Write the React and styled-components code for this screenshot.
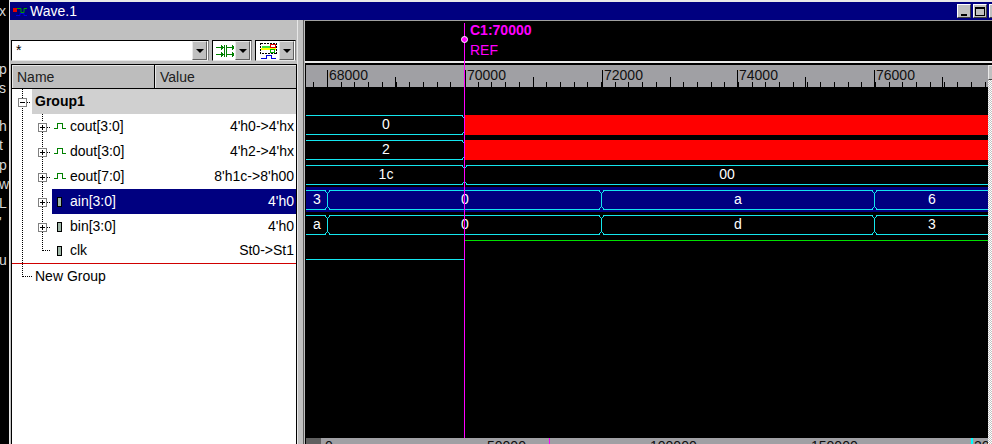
import React from 'react';
import styled, { createGlobalStyle } from 'styled-components';

const GlobalStyle = createGlobalStyle`
    html, body {
        margin: 0;
        padding: 0;
        background: #000;
    }
    body {
        font-family: 'Liberation Sans', Arial, sans-serif;
        font-size: 14px;
    }
`;

const Screen = styled.div`
    display: flex;
    width: 992px;
    height: 444px;
    overflow: hidden;
    background: #000;
`;

const Terminal = styled.div`
    width: 9px;
    flex: none;
    padding-top: 2px;
    overflow: hidden;
    color: #d8d8d8;
`;

const TerminalLine = styled.div`
    height: 19.2px;
    line-height: 19px;
    white-space: nowrap;
    text-indent: ${(p) => p.$indent}px;
`;

const Window = styled.div`
    flex: 1;
    display: flex;
    flex-direction: column;
    min-width: 0;
    border-left: 1px solid #e8e8e8;
    border-top: 2px solid #e8e8e8;
    background: #c0c0c0;
`;

const TitleBar = styled.div`
    height: 18px;
    flex: none;
    display: flex;
    align-items: center;
    gap: 3px;
    padding-left: 3px;
    background: #000080;
    color: #fff;
    line-height: 20px;
`;

const TitleText = styled.span`
    flex: 1;
`;

const WinButtons = styled.div`
    display: flex;
    gap: 2px;
    margin-right: -11px;
`;

const WinButton = styled.div`
    width: 14px;
    height: 14px;
    box-sizing: border-box;
    display: flex;
    align-items: center;
    justify-content: center;
    background: #c0c0c0;
    border: 1px solid;
    border-color: #fff #404040 #404040 #fff;

    i {
        display: block;
        box-sizing: border-box;
    }
    .min {
        width: 6px;
        height: 2px;
        margin-top: 7px;
        background: #000;
    }
    .max {
        width: 10px;
        height: 9px;
        border: 1px solid #000;
        border-top-width: 2px;
    }
`;

const Main = styled.div`
    flex: 1;
    display: flex;
    min-height: 0;
`;

const LeftPanel = styled.div`
    width: 287px;
    flex: none;
    display: flex;
    flex-direction: column;
    padding: 20px 0 0 1px;
    box-sizing: border-box;
`;

const ComboRow = styled.div`
    display: flex;
    gap: 3px;
    height: 21px;
    margin-right: 1px;
`;

const Combo = styled.div`
    display: flex;
    align-items: center;
    box-sizing: border-box;
    width: ${(p) => p.$w}px;
    height: 21px;
    padding: 0 1px 0 ${(p) => p.$pad}px;
    background: #fff;
    border: 1px solid;
    border-color: #000 #808080 #e8e8e8 #000;
`;

const ComboText = styled.span`
    flex: 1;
    line-height: 21px;
    color: #000;
`;

const ComboIcon = styled.div`
    flex: 1;
    display: flex;
    align-items: center;
`;

const ArrowButton = styled.div`
    width: 15px;
    height: 19px;
    box-sizing: border-box;
    display: flex;
    align-items: center;
    justify-content: center;
    background: #c0c0c0;
    border: 1px solid;
    border-color: #e8e8e8 #606060 #606060 #e8e8e8;

    &::after {
        content: '';
        border: 4px solid transparent;
        border-top: 4px solid #000;
        border-bottom: 0;
    }
`;

const TreeFrame = styled.div`
    flex: 1;
    display: flex;
    flex-direction: column;
    min-height: 0;
    margin-top: 3px;
    border-left: 1px solid #000;
    border-right: 1px solid #000;
    background: #fff;
`;

const HeaderRow = styled.div`
    height: 25px;
    flex: none;
    display: flex;
    gap: 1px;
    box-sizing: border-box;
    background: #000;
    border-top: 1px solid #000;
    border-bottom: 1px solid #000;
`;

const HeaderCell = styled.div`
    width: ${(p) => p.$w}px;
    box-sizing: border-box;
    padding-left: 4px;
    line-height: 22px;
    color: #202020;
    background: #bdbdbd;
    border-top: 1px solid #e8e8e8;
    border-left: 1px solid #e8e8e8;
`;

const Tree = styled.div`
    position: relative;
    flex: 1;
`;

const TreeLines = styled.svg`
    position: absolute;
    left: 0;
    top: 0;
    pointer-events: none;
`;

const TreeRow = styled.div`
    position: relative;
    height: 25px;
    display: flex;
    align-items: center;
    box-sizing: border-box;
    padding-left: ${(p) => p.$indent}px;
    padding-bottom: ${(p) => (p.$plain ? 2 : 0)}px;
    border-bottom: ${(p) => (p.$rule ? '1px solid #d00000' : '0')};
`;

const Expander = styled.div`
    width: 9px;
    height: 9px;
    flex: none;
    box-sizing: border-box;
    margin-top: 2px;
    display: flex;
    align-items: center;
    justify-content: center;
    background: #fff;
    border: 1px solid #808080;
    color: #000;
    position: relative;

    &::before {
        content: '';
        width: 5px;
        height: 1px;
        background: #000;
    }
    &::after {
        content: '';
        display: ${(p) => (p.$open ? 'none' : 'block')};
        position: absolute;
        left: 3px;
        top: 1px;
        width: 1px;
        height: 5px;
        background: #000;
    }
`;

const ExpanderGap = styled.div`
    width: 9px;
    flex: none;
`;

const RowBody = styled.div`
    flex: 1;
    height: 25px;
    display: flex;
    align-items: center;
    box-sizing: border-box;
    margin-left: ${(p) => p.$gap}px;
    padding: 0 2px 2px ${(p) => p.$pad || 0}px;
    background: ${(p) => (p.$selected ? '#000080' : p.$group ? '#d0d0d0' : 'transparent')};
    color: ${(p) => (p.$selected ? '#fff' : '#000')};
    font-weight: ${(p) => (p.$group ? 700 : 400)};
`;

const SignalIcon = styled.div`
    width: 16px;
    flex: none;
    display: flex;
    justify-content: center;
    margin: 2px 2px 0 0;
`;

const BusMark = styled.div`
    width: 5px;
    height: 10px;
    margin-right: 1px;
    box-sizing: border-box;
    background: #a0b8a8;
    border: 1px solid #000;
`;

const RowLabel = styled.span`
    flex: 1;
`;

const Splitter = styled.div`
    width: 7px;
    flex: none;
    box-sizing: border-box;
    background: #c0c0c0;
    border-left: 1px solid #e8e8e8;
    border-right: 1px solid #606060;
`;

const WavePanel = styled.div`
    position: relative;
    flex: 1;
    min-width: 0;
    display: flex;
    flex-direction: column;
    background: #000;
    border-top: 1px solid #a0a0a0;
    border-left: 1px solid #c0c0c0;
`;

const CursorBar = styled.div`
    height: 42px;
    flex: none;
    box-sizing: border-box;
    padding: 1px 0 0 165px;
    border-bottom: 2px solid #e8e8e8;
    color: #ff00ff;
`;

const CursorName = styled.div`
    font-weight: 700;
    line-height: 17px;
    height: 20px;
`;

const CursorKind = styled.div`
    line-height: 16px;
`;

const CursorLine = styled.div`
    position: absolute;
    left: 159px;
    top: 2px;
    bottom: 6px;
    width: 1px;
    background: #ff00ff;
`;

const CursorDot = styled.div`
    position: absolute;
    left: 156px;
    top: 15px;
    width: 7px;
    height: 7px;
    box-sizing: border-box;
    border-radius: 50%;
    background: #ff00ff;
    border: 1px solid #fff;
`;

const WaveBody = styled.div`
    flex: 1;
    display: flex;
    min-height: 0;
    padding-top: 2px;
`;

const WaveColumn = styled.div`
    flex: 1;
    min-width: 0;
    display: flex;
    flex-direction: column;
    padding-left: 1px;
`;

const Ruler = styled.svg`
    display: block;
    flex: none;
    background: #a0a0a4;
`;

const Rows = styled.div`
    flex: 1;
    min-height: 0;
    padding-top: 25px;
`;

const WaveSvg = styled.svg`
    display: block;
`;

const Overview = styled.svg`
    display: block;
    flex: none;
    background: #a0a0a4;
`;

const VScroll = styled.div`
    width: 4px;
    flex: none;
    display: flex;
    flex-direction: column;
    background: repeating-conic-gradient(#c0c0c0 0 25%, #fff 0 50%) 0 0 / 2px 2px;
`;

const VThumb = styled.div`
    height: 15px;
    box-sizing: border-box;
    background: #c0c0c0;
    border-top: 1px solid #e8e8e8;
    border-left: 1px solid #e8e8e8;
    border-bottom: 1px solid #404040;
`;

const CYAN = '#14e6ee';
const TOP = 3;
const BOTTOM = 22;

const terminalLines = ['x', '', '', 'p', 's', '', 'h', 't', 'p', 'w', 'L', "'", '', 'u'];

const signals = [
    { name: 'cout[3:0]', value: "4'h0->4'hx", icon: 'wave' },
    { name: 'dout[3:0]', value: "4'h2->4'hx", icon: 'wave' },
    { name: 'eout[7:0]', value: "8'h1c->8'h00", icon: 'wave' },
    { name: 'ain[3:0]', value: "4'h0", icon: 'bus', selected: true },
    { name: 'bin[3:0]', value: "4'h0", icon: 'bus' },
    { name: 'clk', value: 'St0->St1', icon: 'bus', leaf: true },
];

const waves = [
    { bus: [[306, 464, '0', 386]], red: true },
    { bus: [[306, 464, '2', 386]], red: true },
    { bus: [[306, 464, '1c', 386], [464, 988, '00', 727]] },
    {
        selected: true,
        bus: [[306, 327, '3', 317], [327, 601, '0', 465], [601, 874, 'a', 738], [874, 988, '6', 932]],
    },
    { bus: [[306, 327, 'a', 317], [327, 601, '0', 465], [601, 874, 'd', 738], [874, 988, '3', 932]] },
];

const majorTicks = [
    { x: 327, label: '68000' },
    { x: 465, label: '70000' },
    { x: 602, label: '72000' },
    { x: 737, label: '74000' },
    { x: 874, label: '76000' },
];

const smallTicks = Array.from({ length: 50 }, (_, i) => Math.round(313.3 + i * 13.7));

const WaveGlyph = () => (
    <svg width="13" height="7" viewBox="0 0 13 7" fill="none" stroke="#008000" strokeWidth="1" shapeRendering="crispEdges">
        <path d="M0 5.5H3.5V0.5H8.5V5.5H12" />
    </svg>
);

const BusRow = ({ wave }) => {
    // each segment pinches to one column where the value changes
    const lines = wave.bus.map(([from, to], i) => {
        const start = from === 306 ? 306 : from + 3;
        const end = to === 988 ? 988 : to - 2;
        let d = `M${start} ${TOP + 0.5}H${end}`;
        if (to !== 988) d += `L${to + 0.5} ${TOP + 4}V${BOTTOM - 3}L${end} ${BOTTOM + 0.5}`;
        else d += `M${end} ${BOTTOM + 0.5}`;
        d += `H${start}`;
        if (from !== 306) d += `L${from + 0.5} ${BOTTOM - 3}V${TOP + 4}L${start} ${TOP + 0.5}`;
        return <path key={i} d={d} />;
    });
    return (
        <WaveSvg width="682" height="25" viewBox="306 0 682 25">
            {wave.selected && <rect x="306" y="0" width="682" height="25" fill="#000080" />}
            {wave.red && <rect x="465" y={TOP} width="523" height="20" fill="#ff0000" />}
            <g fill="none" stroke={CYAN} strokeWidth="1" shapeRendering="crispEdges">{lines}</g>
            <g fill="#fff" fontFamily="'Liberation Sans', Arial, sans-serif" fontSize="14" textAnchor="middle">
                {wave.bus.map(([, , label, x]) => (
                    <text key={x} x={x} y="17">{label}</text>
                ))}
            </g>
        </WaveSvg>
    );
};

const App = () => {
    return (
        <Screen>
            <GlobalStyle />
            <Terminal>
                {terminalLines.map((line, i) => (
                    <TerminalLine key={i} $indent={-1}>{line || '\u00a0'}</TerminalLine>
                ))}
            </Terminal>
            <Window>
                <TitleBar>
                    <svg width="14" height="10" viewBox="0 0 14 10" fill="none">
                        <path d="M1 7V4H5V8H9V2H14" stroke="#000060" />
                        <rect x="0" y="2" width="4" height="4" fill="#e00000" />
                        <path d="M4 2.5H8V6.5H11V2.5H14" stroke="#00a000" />
                        <path d="M3 9.5H7V7.5H11V9.5H14" stroke="#0000e0" />
                    </svg>
                    <TitleText>Wave.1</TitleText>
                    <WinButtons>
                        <WinButton><i className="min" /></WinButton>
                        <WinButton><i className="max" /></WinButton>
                        <WinButton />
                    </WinButtons>
                </TitleBar>
                <Main>
                    <LeftPanel>
                        <ComboRow>
                            <Combo $w={199} $pad={4}>
                                <ComboText>*</ComboText>
                                <ArrowButton />
                            </Combo>
                            <Combo $w={40} $pad={3}>
                                <ComboIcon>
                                    <svg width="18" height="12" viewBox="0 0 18 12" fill="none" stroke="#008000" shapeRendering="crispEdges">
                                        <path d="M0 2.5H7M5 0.5L7 2.5L5 4.5M0 9.5H7M5 7.5L7 9.5L5 11.5" />
                                        <path d="M8.5 0V12M10.5 0V12" />
                                        <path d="M11 2.5H18M16 0.5L18 2.5L16 4.5M11 9.5H18M16 7.5L18 9.5L16 11.5" />
                                    </svg>
                                </ComboIcon>
                                <ArrowButton />
                            </Combo>
                            <Combo $w={41} $pad={4}>
                                <ComboIcon>
                                    <svg width="18" height="17" viewBox="0 0 18 17" fill="none" shapeRendering="crispEdges">
                                        <rect x="0.5" y="1.5" width="16" height="10" stroke="#000" strokeDasharray="2 1" />
                                        <rect x="2" y="4" width="9" height="2" fill="#40e040" />
                                        <rect x="1" y="6" width="15" height="2" fill="#ffff00" />
                                        <rect x="10.5" y="2.5" width="5" height="3" stroke="#e00000" />
                                        <rect x="10.5" y="7.5" width="4" height="3" stroke="#00b000" />
                                        <path d="M1 16.5H6V13.5H11V16.5H16" stroke="#0000e0" />
                                    </svg>
                                </ComboIcon>
                                <ArrowButton />
                            </Combo>
                        </ComboRow>
                        <TreeFrame>
                            <HeaderRow>
                                <HeaderCell $w={142}>Name</HeaderCell>
                                <HeaderCell $w={141}>Value</HeaderCell>
                            </HeaderRow>
                            <Tree>
                                <TreeRow $indent={6}>
                                    <Expander $open />
                                    <RowBody $group $gap={5} $pad={3}>Group1</RowBody>
                                </TreeRow>
                                {signals.map((s) => (
                                    <TreeRow key={s.name} $indent={26} $rule={s.leaf}>
                                        {s.leaf ? <ExpanderGap /> : <Expander />}
                                        <RowBody $selected={s.selected} $gap={5}>
                                            <SignalIcon>
                                                {s.icon === 'wave' ? <WaveGlyph /> : <BusMark />}
                                            </SignalIcon>
                                            <RowLabel>{s.name}</RowLabel>
                                            {s.value}
                                        </RowBody>
                                    </TreeRow>
                                ))}
                                <TreeRow $indent={23} $plain>New Group</TreeRow>
                                <TreeLines width="283" height="200" viewBox="12 89 283 200" fill="none" stroke="#000" strokeDasharray="1 1" shapeRendering="crispEdges">
                                    <path d="M22.5 89V98M22.5 108V277" />
                                    <path d="M22.5 276.5H33" />
                                    <path d="M27 102.5H31" />
                                    <path d="M42.5 114V122M42.5 132V147M42.5 157V172M42.5 182V197M42.5 207V222M42.5 232V251" />
                                    <path d="M42.5 250.5H50" />
                                    <path d="M47 127.5H51M47 152.5H51M47 177.5H51M47 202.5H51M47 227.5H51" />
                                </TreeLines>
                            </Tree>
                        </TreeFrame>
                    </LeftPanel>
                    <Splitter />
                    <WavePanel>
                        <CursorBar>
                            <CursorName>C1:70000</CursorName>
                            <CursorKind>REF</CursorKind>
                        </CursorBar>
                        <WaveBody>
                            <WaveColumn>
                                <Ruler width="682" height="22" viewBox="306 65 682 22" stroke="#000" shapeRendering="crispEdges">
                                    {smallTicks.map((x) => (
                                        <path key={x} d={`M${x + 0.5} 82V87`} />
                                    ))}
                                    {majorTicks.map((t) => (
                                        <path key={t.x} d={`M${t.x + 68.5} 77V87`} />
                                    ))}
                                    {majorTicks.map((t) => (
                                        <g key={t.x}>
                                            <path d={`M${t.x + 0.5} 70V87`} />
                                            <text x={t.x + 2} y="80" fill="#101010" stroke="none" fontFamily="'Liberation Sans', Arial, sans-serif" fontSize="14">{t.label}</text>
                                        </g>
                                    ))}
                                </Ruler>
                                <Rows>
                                    {waves.map((w, i) => (
                                        <BusRow key={i} wave={w} />
                                    ))}
                                    <WaveSvg width="682" height="25" viewBox="306 0 682 25" shapeRendering="crispEdges">
                                        <path d={`M465 ${TOP + 0.5}H988`} stroke="#00e000" />
                                        <path d={`M306 ${BOTTOM + 0.5}H464`} stroke={CYAN} />
                                    </WaveSvg>
                                </Rows>
                                <Overview width="682" height="6" viewBox="306 438 682 6" shapeRendering="crispEdges">
                                    <rect x="306" y="438" width="15" height="6" fill="#606060" />
                                    <rect x="549" y="438" width="1" height="6" fill="#ff00ff" />
                                    <rect x="971" y="438" width="2" height="6" fill="#00ffff" />
                                    <g fill="#101010" fontFamily="'Liberation Sans', Arial, sans-serif" fontSize="14">
                                        <text x="325" y="451">0</text>
                                        <text x="487" y="451">50000</text>
                                        <text x="650" y="451">100000</text>
                                        <text x="811" y="451">150000</text>
                                        <text x="974" y="451">200000</text>
                                    </g>
                                </Overview>
                            </WaveColumn>
                            <VScroll>
                                <VThumb />
                            </VScroll>
                        </WaveBody>
                        <CursorLine />
                        <CursorDot />
                    </WavePanel>
                </Main>
            </Window>
        </Screen>
    );
};

export default App;
